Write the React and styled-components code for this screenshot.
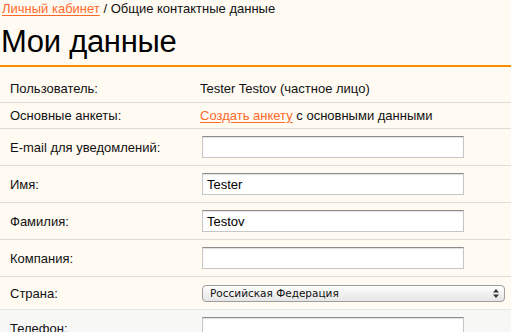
import React from "react";
import styled, { createGlobalStyle } from "styled-components";

const Global = createGlobalStyle`
  html, body { margin: 0; padding: 0; background: #fffbf3; }
  body { font-family: "Liberation Sans", Arial, sans-serif; color: #111; }
`;

const Page = styled.div`
  width: 511px;
  overflow: hidden;
`;

const Crumbs = styled.div`
  font-size: 13px;
  line-height: 18px;
  padding-left: 2px;
  color: #111;
`;

const Link = styled.a`
  color: #ff6a2a;
  text-decoration: underline;
  text-underline-offset: 2px;
  cursor: pointer;
`;

const Title = styled.h1`
  margin: 6px 0 0;
  padding: 0 0 5px 1px;
  font-size: 31px;
  line-height: 36px;
  font-weight: normal;
  letter-spacing: -0.3px;
  color: #000;
  border-bottom: 2px solid #f98c00;
`;

const Table = styled.div`
  padding-top: 8px;
`;

const Row = styled.div`
  display: grid;
  grid-template-columns: 200px 1fr;
  align-items: center;
  height: ${(p) => p.$h}px;
  border-bottom: 1px solid ${(p) => (p.$last ? "#e6e6e2" : "#dcdcd8")};
  background: ${(p) => (p.$gray ? "#f7f7f6" : "transparent")};
  font-size: 13px;
`;

const Label = styled.div`
  padding-left: 10px;
  color: #111;
`;

const Value = styled.div`
  color: #111;
`;

const Input = styled.input`
  box-sizing: border-box;
  margin-left: 2px;
  width: 262px;
  height: 22px;
  padding: 0 4px;
  border: 1px solid #c6c6c6;
  border-top-color: #8c8c8c;
  box-shadow: inset 0 1px 1px rgba(0, 0, 0, 0.12);
  background: #fff;
  font-family: "Liberation Sans", Arial, sans-serif;
  font-size: 13px;
  color: #000;
  outline: none;
`;

const SelectWrap = styled.div`
  position: relative;
  margin-left: 2px;
  width: 303px;
  height: 17px;
`;

const Select = styled.select`
  appearance: none;
  -webkit-appearance: none;
  box-sizing: border-box;
  width: 100%;
  height: 17px;
  margin: 0;
  padding: 0 0 0 7px;
  border: 1px solid #9d9d9d;
  border-radius: 4px;
  background: linear-gradient(#ffffff, #f1f1f1 50%, #e6e6e6);
  font-family: "DejaVu Sans", sans-serif;
  font-size: 10.5px;
  line-height: 15px;
  color: #111;
  outline: none;
`;

const Arrows = styled.svg`
  position: absolute;
  right: 6px;
  top: 4px;
  pointer-events: none;
`;

export default function App() {
  return (
    <Page>
      <Global />
      <Crumbs>
        <Link>Личный кабинет</Link> / Общие контактные данные
      </Crumbs>
      <Title>Мои данные</Title>
      <Table>
        <Row $h={27}>
          <Label>Пользователь:</Label>
          <Value>Tester Testov (частное лицо)</Value>
        </Row>
        <Row $h={25}>
          <Label>Основные анкеты:</Label>
          <Value>
            <Link>Создать анкету</Link> с основными данными
          </Value>
        </Row>
        <Row $h={36}>
          <Label>E-mail для уведомлений:</Label>
          <Value>
            <Input defaultValue="" />
          </Value>
        </Row>
        <Row $h={36}>
          <Label>Имя:</Label>
          <Value>
            <Input defaultValue="Tester" />
          </Value>
        </Row>
        <Row $h={36}>
          <Label>Фамилия:</Label>
          <Value>
            <Input defaultValue="Testov" />
          </Value>
        </Row>
        <Row $h={36}>
          <Label>Компания:</Label>
          <Value>
            <Input defaultValue="" />
          </Value>
        </Row>
        <Row $h={32} $last>
          <Label>Страна:</Label>
          <Value>
            <SelectWrap>
              <Select defaultValue="ru">
                <option value="ru">Российская Федерация</option>
              </Select>
              <Arrows width="6" height="9" viewBox="0 0 6 9">
                <path d="M3 0 L6 3.5 H0 Z" fill="#333" />
                <path d="M3 9 L6 5.5 H0 Z" fill="#333" />
              </Arrows>
            </SelectWrap>
          </Value>
        </Row>
        <Row $h={36} $gray>
          <Label>Телефон:</Label>
          <Value>
            <Input defaultValue="" />
          </Value>
        </Row>
      </Table>
    </Page>
  );
}
